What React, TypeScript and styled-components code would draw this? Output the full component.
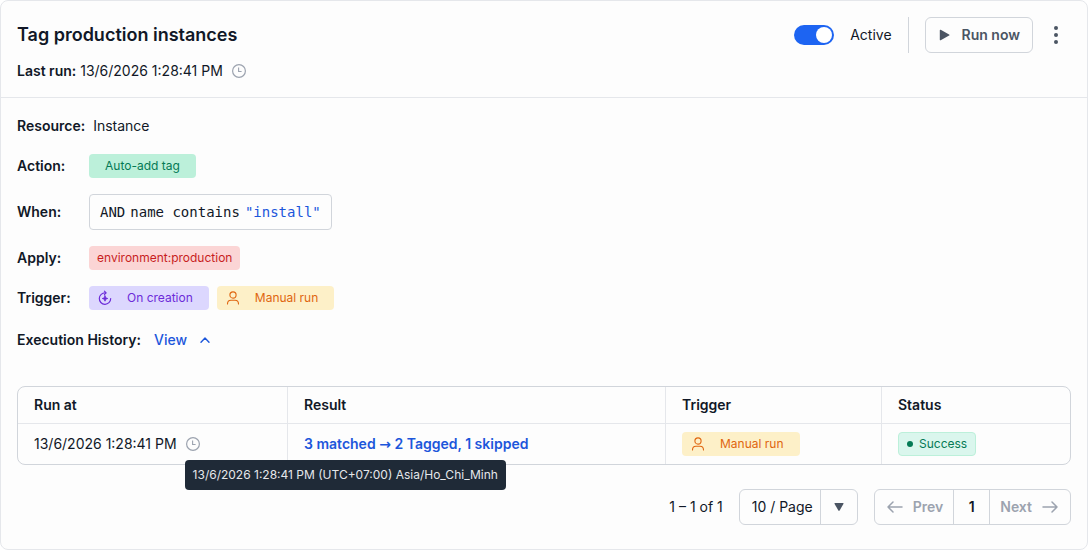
import React, { useState } from "react";
import styled, { createGlobalStyle } from "styled-components";

const GlobalStyle = createGlobalStyle`
  * {
    box-sizing: border-box;
  }

  body {
    margin: 0;
    background: #ffffff;
    color: #111827;
    font-family: Inter, "Liberation Sans", sans-serif;
    font-size: 14px;
    line-height: 20px;
  }

  button,
  select {
    margin: 0;
    font: inherit;
    color: inherit;
  }
`;

const Card = styled.article`
  background: #fdfdfd;
  border: 1px solid #e5e7eb;
  border-radius: 8px;
`;

const CardHeader = styled.header`
  display: flex;
  flex-direction: column;
  gap: 8px;
  padding: 16px;
  border-bottom: 1px solid #e5e7eb;
`;

const TitleRow = styled.div`
  display: flex;
  align-items: center;
  justify-content: space-between;
`;

const Title = styled.h2`
  margin: 0;
  font-size: 18px;
  font-weight: 600;
  line-height: 24px;
`;

const HeaderActions = styled.div`
  display: flex;
  align-items: center;
  gap: 16px;
`;

const SwitchLabel = styled.label`
  display: flex;
  align-items: center;
  gap: 16px;
  cursor: pointer;
`;

const Switch = styled.input`
  display: flex;
  appearance: none;
  align-items: center;
  width: 40px;
  height: 20px;
  margin: 0;
  padding: 0 2px;
  border-radius: 10px;
  background: #9ca3af;
  cursor: pointer;

  &::before {
    content: "";
    width: 16px;
    height: 16px;
    border-radius: 50%;
    background: #ffffff;
  }

  &:checked {
    justify-content: flex-end;
    background: #1d64f2;
  }
`;

const Divider = styled.span`
  width: 1px;
  height: 36px;
  background: #d1d5db;
`;

const ButtonGroup = styled.div`
  display: flex;
  align-items: center;
  gap: 8px;
`;

const RunButton = styled.button`
  display: flex;
  align-items: center;
  gap: 8px;
  height: 36px;
  padding: 0 12px;
  border: 1px solid #d1d5db;
  border-radius: 6px;
  background: #fdfdfd;
  color: #4b5563;
  font-weight: 600;
  cursor: pointer;
`;

const MoreButton = styled.button`
  display: flex;
  align-items: center;
  justify-content: center;
  width: 30px;
  height: 36px;
  padding: 0;
  border: none;
  background: none;
  color: #4b5563;
  cursor: pointer;
`;

const Label = styled.span`
  font-weight: 600;
`;

const RunTime = styled.div`
  display: flex;
  align-items: center;
  gap: 8px;
`;

const CardBody = styled.div`
  display: flex;
  flex-direction: column;
  gap: 16px;
  padding: 16px 16px 24px;
`;

const FieldRow = styled.div`
  display: flex;
  align-items: center;
  gap: 8px;
  min-height: 24px;

  ${Label} {
    min-width: 64px;
  }
`;

const tones = {
  green: { background: "#bcf0da", color: "#057a55" },
  red: { background: "#fbd5d5", color: "#c81e1e" },
  purple: { background: "#dcd7fe", color: "#6c2bd9" },
  yellow: { background: "#fdf0c8", color: "#e06610" },
};

type Tone = keyof typeof tones;

const Badge = styled.span<{ $tone: Tone; $wide?: boolean }>`
  display: inline-flex;
  align-items: center;
  gap: 14px;
  height: 24px;
  padding: 0 ${(props) => (props.$wide ? 16 : 8)}px;
  border-radius: 4px;
  background: ${(props) => tones[props.$tone].background};
  color: ${(props) => tones[props.$tone].color};
  font-size: 12px;
  line-height: 16px;

  svg {
    margin-left: -8px;
  }
`;

const StatusBadge = styled.span`
  display: inline-flex;
  align-items: center;
  gap: 6px;
  height: 24px;
  padding: 0 8px;
  border: 1px solid #bcf0da;
  border-radius: 4px;
  background: #daf6ed;
  color: #057a55;
  font-size: 12px;
  line-height: 16px;

  &::before {
    content: "";
    width: 6px;
    height: 6px;
    border-radius: 50%;
    background: #057a55;
  }
`;

const Condition = styled.code`
  display: flex;
  align-items: center;
  gap: 5px;
  height: 36px;
  padding: 0 10px;
  border: 1px solid #d1d5db;
  border-radius: 4px;
  font-family: "DejaVu Sans Mono", monospace;
  font-size: 14px;
`;

const ConditionValue = styled.span`
  color: #1c56db;
`;

const HistoryRow = styled.div`
  display: flex;
  align-items: center;
  gap: 13px;
  height: 28px;
`;

const ViewButton = styled.button`
  display: flex;
  align-items: center;
  gap: 10px;
  padding: 0;
  border: none;
  background: none;
  color: #1c56db;
  font-weight: 500;
  cursor: pointer;
`;

const History = styled.section`
  display: flex;
  flex-direction: column;
  gap: 24px;
  padding-top: 16px;
`;

const Table = styled.table`
  width: 100%;
  table-layout: fixed;
  border: 1px solid #d1d5db;
  border-radius: 8px;
  border-collapse: separate;
  border-spacing: 0;
  text-align: left;
`;

const Col = styled.col<{ $width?: number }>`
  width: ${(props) => (props.$width ? `${props.$width}px` : "auto")};
`;

const Th = styled.th`
  height: 37px;
  padding: 0 16px;
  border-bottom: 1px solid #e5e7eb;
  font-weight: 600;

  & + & {
    border-left: 1px solid #e5e7eb;
  }
`;

const Td = styled.td`
  height: 40px;
  padding: 0 16px;

  & + & {
    border-left: 1px solid #e5e7eb;
  }

  ${Badge}, ${StatusBadge} {
    vertical-align: middle;
  }
`;

const ResultLink = styled.a`
  color: #1c56db;
  font-weight: 600;
  text-decoration: none;
`;

const ResultArrow = styled.span`
  font-family: "DejaVu Sans", sans-serif;
  line-height: 1;
`;

const TooltipAnchor = styled.span`
  display: flex;
  position: relative;
  color: #9ca3af;
`;

const Tooltip = styled.span`
  position: absolute;
  top: 24px;
  left: 0;
  z-index: 1;
  padding: 5px 8px;
  border-radius: 4px;
  background: #1f2a37;
  color: #e5e7eb;
  font-size: 12px;
  line-height: 20px;
  white-space: nowrap;
`;

const Pagination = styled.nav`
  display: flex;
  align-items: center;
  justify-content: flex-end;
  gap: 16px;
`;

const PageSizeBox = styled.div`
  display: grid;
  height: 36px;
  border: 1px solid #d1d5db;
  border-radius: 6px;
`;

const PageSizeSelect = styled.select`
  grid-area: 1 / 1;
  appearance: none;
  padding: 0 41px 0 12px;
  border: none;
  border-radius: 6px;
  background: none;
  cursor: pointer;
`;

const PageSizeCaret = styled.span`
  display: flex;
  grid-area: 1 / 1;
  justify-self: end;
  align-items: center;
  justify-content: center;
  width: 37px;
  border-left: 1px solid #d1d5db;
  color: #4b5563;
  pointer-events: none;
`;

const Pager = styled.div`
  display: flex;
  height: 36px;
  border: 1px solid #d1d5db;
  border-radius: 6px;
`;

const PagerButton = styled.button`
  display: flex;
  align-items: center;
  justify-content: center;
  gap: 8px;
  min-width: 36px;
  padding: 0 10px;
  border: none;
  background: none;
  font-weight: 600;

  & + & {
    border-left: 1px solid #d1d5db;
  }

  &:disabled {
    color: #9ca3af;
  }
`;

const ClockIcon = () => (
  <svg width="16" height="16" viewBox="0 0 16 16" fill="none" stroke="currentColor">
    <circle cx="8" cy="8" r="6.4" strokeWidth="1.2" />
    <path d="M7.6 4.5v4h3" strokeWidth="1.1" />
  </svg>
);

const PlayIcon = () => (
  <svg width="16" height="16" viewBox="0 0 16 16" fill="currentColor">
    <path d="M1.8 3.3c0-.5.5-.8.9-.6l8.4 4.7c.5.3.5.9 0 1.2l-8.4 4.7c-.4.2-.9-.1-.9-.6z" />
  </svg>
);

const DotsIcon = () => (
  <svg width="20" height="20" viewBox="0 0 20 20" fill="currentColor">
    <circle cx="10" cy="3" r="2" />
    <circle cx="10" cy="10" r="2" />
    <circle cx="10" cy="17" r="2" />
  </svg>
);

const CreationIcon = () => (
  <svg width="16" height="16" viewBox="0 0 16 16" fill="none" stroke="currentColor" strokeLinecap="round" strokeLinejoin="round">
    <path d="M13.7 8.6A5.7 5.7 0 1 1 8.4 2.9" strokeWidth="1.2" />
    <path d="M7.4 1.2l1.8 1.7-1.8 1.7" strokeWidth="1.1" />
    <path d="M8 5.8l.7 2 2 .7-2 .7-.7 2-.7-2-2-.7 2-.7z" fill="currentColor" strokeWidth=".9" />
  </svg>
);

const UserIcon = () => (
  <svg width="16" height="16" viewBox="0 0 16 16" fill="none" stroke="currentColor" strokeWidth="1.1" strokeLinecap="round">
    <circle cx="8" cy="5" r="3.1" />
    <path d="M2.5 14c0-2.600 1.600-3.700 3.500-3.700h4c1.900 0 3.500 1.100 3.500 3.700" />
  </svg>
);

const ChevronIcon = ({ open }: { open: boolean }) => (
  <svg width="16" height="16" viewBox="0 0 16 16" fill="none" stroke="currentColor" strokeWidth="1.4" strokeLinecap="round" strokeLinejoin="round">
    <path d={open ? "M4 10.2L8 6l4 4.2" : "M4 6l4 4.2L12 6"} />
  </svg>
);

const CaretIcon = () => (
  <svg width="10" height="10" viewBox="0 0 10 10" fill="currentColor">
    <path d="M1 1h8c.5 0 .7.4.5.8L5.6 8.6c-.3.5-.9.5-1.2 0L.5 1.8C.3 1.4.5 1 1 1z" />
  </svg>
);

const ArrowIcon = ({ direction }: { direction: "left" | "right" }) => (
  <svg width="20" height="20" viewBox="0 0 20 20" fill="none" stroke="currentColor" strokeWidth="1.5" strokeLinecap="round" strokeLinejoin="round">
    <path d={direction === "left" ? "M17 10H3m5-5l-5 5 5 5" : "M3 10h14m-5-5l5 5-5 5"} />
  </svg>
);

const runs = [
  {
    id: 1,
    runAt: "13/6/2026 1:28:41 PM",
    zone: "(UTC+07:00) Asia/Ho_Chi_Minh",
    matched: "3 matched",
    outcome: "2 Tagged, 1 skipped",
    trigger: "Manual run",
    status: "Success",
  },
];

const App = () => {
  const [active, setActive] = useState(true);
  const [open, setOpen] = useState(true);
  const [pageSize, setPageSize] = useState("10");

  return (
    <>
      <GlobalStyle />
      <Card>
        <CardHeader>
          <TitleRow>
            <Title>Tag production instances</Title>
            <HeaderActions>
              <SwitchLabel>
                <Switch
                  type="checkbox"
                  role="switch"
                  checked={active}
                  onChange={(e) => setActive(e.target.checked)}
                />
                Active
              </SwitchLabel>
              <Divider />
              <ButtonGroup>
                <RunButton type="button">
                  <PlayIcon />
                  Run now
                </RunButton>
                <MoreButton type="button" aria-label="More actions">
                  <DotsIcon />
                </MoreButton>
              </ButtonGroup>
            </HeaderActions>
          </TitleRow>
          <RunTime>
            <span>
              <Label>Last run:</Label> {runs[0].runAt}
            </span>
            <TooltipAnchor>
              <ClockIcon />
            </TooltipAnchor>
          </RunTime>
        </CardHeader>

        <CardBody>
          <FieldRow>
            <Label>Resource:</Label>
            <span>Instance</span>
          </FieldRow>
          <FieldRow>
            <Label>Action:</Label>
            <Badge $tone="green" $wide>
              Auto-add tag
            </Badge>
          </FieldRow>
          <FieldRow>
            <Label>When:</Label>
            <Condition>
              <span>AND</span>
              <span>name contains</span>
              <ConditionValue>"install"</ConditionValue>
            </Condition>
          </FieldRow>
          <FieldRow>
            <Label>Apply:</Label>
            <Badge $tone="red">environment:production</Badge>
          </FieldRow>
          <FieldRow>
            <Label>Trigger:</Label>
            <Badge $tone="purple" $wide>
              <CreationIcon />
              On creation
            </Badge>
            <Badge $tone="yellow" $wide>
              <UserIcon />
              Manual run
            </Badge>
          </FieldRow>
          <HistoryRow>
            <Label>Execution History:</Label>
            <ViewButton
              type="button"
              aria-expanded={open}
              onClick={() => setOpen(!open)}
            >
              View
              <ChevronIcon open={open} />
            </ViewButton>
          </HistoryRow>

          {open ? (
            <History>
              <Table>
                <colgroup>
                  <Col $width={269} />
                  <Col />
                  <Col $width={216} />
                  <Col $width={189} />
                </colgroup>
                <thead>
                  <tr>
                    <Th>Run at</Th>
                    <Th>Result</Th>
                    <Th>Trigger</Th>
                    <Th>Status</Th>
                  </tr>
                </thead>
                <tbody>
                  {runs.map((run) => (
                    <tr key={run.id}>
                      <Td>
                        <RunTime>
                          {run.runAt}
                          <TooltipAnchor>
                            <ClockIcon />
                            <Tooltip role="tooltip">
                              {run.runAt} {run.zone}
                            </Tooltip>
                          </TooltipAnchor>
                        </RunTime>
                      </Td>
                      <Td>
                        <ResultLink href="#result">
                          {run.matched} <ResultArrow>→</ResultArrow> {run.outcome}
                        </ResultLink>
                      </Td>
                      <Td>
                        <Badge $tone="yellow" $wide>
                          <UserIcon />
                          {run.trigger}
                        </Badge>
                      </Td>
                      <Td>
                        <StatusBadge>{run.status}</StatusBadge>
                      </Td>
                    </tr>
                  ))}
                </tbody>
              </Table>

              <Pagination aria-label="Pagination">
                <span>1 – 1 of 1</span>
                <PageSizeBox>
                  <PageSizeSelect
                    aria-label="Rows per page"
                    value={pageSize}
                    onChange={(e) => setPageSize(e.target.value)}
                  >
                    <option value="10">10 / Page</option>
                    <option value="20">20 / Page</option>
                    <option value="50">50 / Page</option>
                  </PageSizeSelect>
                  <PageSizeCaret>
                    <CaretIcon />
                  </PageSizeCaret>
                </PageSizeBox>
                <Pager>
                  <PagerButton type="button" disabled>
                    <ArrowIcon direction="left" />
                    Prev
                  </PagerButton>
                  <PagerButton type="button" aria-current="page">
                    1
                  </PagerButton>
                  <PagerButton type="button" disabled>
                    Next
                    <ArrowIcon direction="right" />
                  </PagerButton>
                </Pager>
              </Pagination>
            </History>
          ) : null}
        </CardBody>
      </Card>
    </>
  );
};

export default App;
